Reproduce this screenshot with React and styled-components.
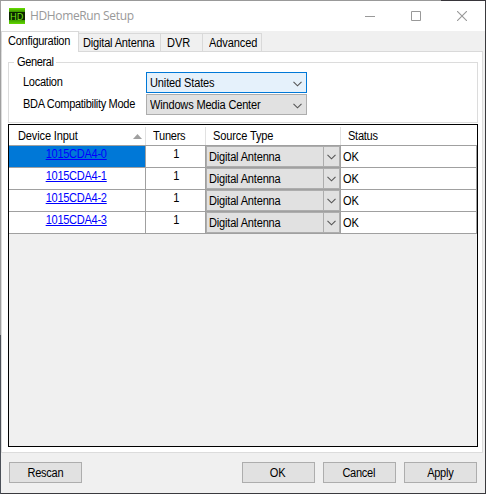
import React from "react";
import styled, { createGlobalStyle } from "styled-components";

const GlobalStyle = createGlobalStyle`
  * { box-sizing: border-box; }
  body { margin: 0; background: #3a3a3e; overflow: hidden; }
  button { font: inherit; color: inherit; }
`;

const Desktop = styled.div`
  width: 486px;
  height: 494px;
  padding: 1px;
  background:
    linear-gradient(90deg, #999 441px, #37353a 441px) 0 0 / 486px 1px no-repeat,
    linear-gradient(#a0a0a0 335px, #4b5058 335px) 0 0 / 1px 494px no-repeat,
    #3a3a3e;
`;

const Window = styled.main`
  width: 484px;
  height: 492px;
  display: flex;
  flex-direction: column;
  background: #f0f0f0;
  font: 12px/13px "Liberation Sans", Arial, sans-serif;
  color: #000;
`;

const Label = styled.span`
  display: inline-block;
  white-space: nowrap;
  letter-spacing: ${(p) => p.$track ?? -0.3}px;
  transform: scaleX(0.92);
  transform-origin: ${(p) => (p.$center ? "center" : "left")};
`;

const TitleBar = styled.header`
  height: 30px;
  flex: none;
  display: flex;
  align-items: center;
  padding-left: 8px;
  background: #fff;
`;

const Logo = styled.svg`
  width: 16px;
  height: 16px;
  margin-right: 5px;
`;

const Title = styled.h1`
  flex: 1;
  margin: 0;
  font: 12px/16px "Open Sans", sans-serif;
  letter-spacing: -0.36px;
  color: #999;
`;

const WindowButton = styled.button`
  width: 46px;
  height: 30px;
  padding: 0;
  border: 0;
  display: grid;
  place-items: center;
  background: transparent;
`;

const TabStrip = styled.nav`
  height: 21px;
  flex: none;
  display: flex;
  align-items: flex-end;
`;

const Tab = styled.button`
  width: ${(p) => p.$width}px;
  height: ${(p) => (p.$active ? 21 : 19)}px;
  padding: 3px 0 0 ${(p) => p.$left}px;
  border: solid #d9d9d9;
  border-width: ${(p) => (p.$active ? "1px 1px 0 1px" : "1px 1px 1px 0")};
  display: flex;
  align-items: flex-start;
  background: ${(p) => (p.$active ? "#fff" : "#f0f0f0")};
`;

const TabFill = styled.div`
  flex: 1;
  height: 1px;
  margin-right: 2px;
  background: #d9d9d9;
`;

const Panel = styled.section`
  width: 482px;
  height: 401px;
  flex: none;
  padding: 10px 5px 5px 6px;
  border: solid #dcdcdc;
  border-width: 0 1px 1px 1px;
  background: #fff;
`;

const Group = styled.fieldset`
  height: 67px;
  width: 470px;
  margin: -6px 0 0;
  padding: 3px 0 0 14px;
  border: 1px solid #dcdcdc;
  min-width: 0;
`;

const Legend = styled.legend`
  width: 42px;
  height: 13px;
  margin-left: -9px;
  padding: 0 2px 0 3px;
`;

const Field = styled.div`
  height: 22px;
  display: grid;
  grid-template-columns: 123px 161px;
  align-items: start;
`;

const FieldLabel = styled.label`
  padding-top: 4px;
`;

const Combo = styled.div`
  height: 21px;
  display: flex;
  align-items: center;
  justify-content: space-between;
  padding: ${(p) => (p.$cell ? "2px 4px 0 2px" : "2px 4px 0 3px")};
  border: 1px solid ${(p) => (p.$focus ? "#0078d7" : "#adadad")};
  background: ${(p) => (p.$focus ? "#e5f1fb" : "#e1e1e1")};
`;

const Grid = styled.div`
  width: 470px;
  height: 323px;
  margin-top: 1px;
  border: 1px solid #000;
  background: #f0f0f0;
`;

const HeaderRow = styled.div`
  height: 21px;
  display: grid;
  grid-template-columns: 137px 60px 135px 136px;
  background: #fff;
  border-bottom: 1px solid #a0a0a0;
`;

const HeaderCell = styled.div`
  display: flex;
  justify-content: space-between;
  align-items: center;
  margin-top: 2px;
  padding: 0 3px 0 ${(p) => p.$left ?? 7}px;
  border-right: ${(p) => (p.$last ? 0 : 1)}px solid #e1e1e1;
`;

const Row = styled.div`
  height: 22px;
  display: grid;
  grid-template-columns: 137px 60px 135px 136px;
  background: #fff;
`;

const Cell = styled.div`
  padding: ${(p) => p.$pad ?? "2px 0 0"};
  text-align: ${(p) => p.$align ?? "center"};
  border: solid #a0a0a0;
  border-width: 0 1px 1px 0;
  background: ${(p) => (p.$selected ? "#0078d7" : "transparent")};
`;

const ComboCell = styled(Cell)`
  background: #e1e1e1;
  padding: 0;
`;

const DropButton = styled.span`
  height: 19px;
  width: 16px;
  margin: -2px -4px 0 0;
  display: grid;
  place-items: center;
  border-left: 1px solid #adadad;
`;

const DeviceLink = styled(Label).attrs({ as: "a" })`
  color: #00f;
  text-decoration: underline;
  text-underline-offset: 1px;
  text-decoration-thickness: 1px;
  text-decoration-skip-ink: none;
`;

const Footer = styled.footer`
  display: flex;
  gap: 8px;
  padding: 9px 8px 0 8px;
`;

const Button = styled.button`
  width: 73px;
  height: 21px;
  padding: 1px 1px 0 0;
  border: 1px solid #adadad;
  background: #e1e1e1;
  &:first-child { margin-right: auto; }
`;

const Chevron = () => (
  <svg width="9" height="6" viewBox="0 0 9 6" fill="none" stroke="#555" strokeWidth="1.1">
    <path d="M.5 .8 4.5 4.8 8.5 .8" />
  </svg>
);

const tabs = [
  { name: "Configuration", width: 78, left: 6, active: true },
  { name: "Digital Antenna", width: 82, left: 4, track: -0.2 },
  { name: "DVR", width: 42, left: 6, track: 0 },
  { name: "Advanced", width: 59, left: 6, track: -0.1 },
];
const devices = ["1015CDA4-0", "1015CDA4-1", "1015CDA4-2", "1015CDA4-3"];

export default function App() {
  return (
    <>
      <GlobalStyle />
      <Desktop>
        <Window>
          <TitleBar>
            <Logo viewBox="0 0 16 16">
              <defs>
                <linearGradient id="band" x2="0" y2="1">
                  <stop offset="0" stopColor="#66e000" />
                  <stop offset=".25" stopColor="#3c9000" />
                  <stop offset=".26" stopColor="#0c2600" />
                  <stop offset=".75" stopColor="#0c2600" />
                  <stop offset=".76" stopColor="#3fa000" />
                  <stop offset="1" stopColor="#62d800" />
                </linearGradient>
              </defs>
              <rect width="16" height="16" fill="url(#band)" />
              <text x="1" y="11.5" textLength="13.5" lengthAdjust="spacingAndGlyphs" fontFamily="Open Sans" fontSize="9.5" fill="#78f014">HD</text>
            </Logo>
            <Title>HDHomeRun Setup</Title>
            <WindowButton aria-label="Minimize">
              <svg width="10" height="10"><path d="M0 5.5h10" stroke="#999" /></svg>
            </WindowButton>
            <WindowButton aria-label="Maximize">
              <svg width="10" height="10"><path d="M.5.5h9v9h-9z" fill="none" stroke="#999" /></svg>
            </WindowButton>
            <WindowButton aria-label="Close">
              <svg width="10" height="10"><path d="m0 0 10 10M10 0 0 10" stroke="#999" strokeWidth="1.1" /></svg>
            </WindowButton>
          </TitleBar>
          <TabStrip>
            {tabs.map((t) => (
              <Tab key={t.name} $width={t.width} $left={t.left} $active={t.active}>
                <Label $track={t.track}>{t.name}</Label>
              </Tab>
            ))}
            <TabFill />
          </TabStrip>
          <Panel>
            <Group>
              <Legend><Label $track={-0.4}>General</Label></Legend>
              <Field>
                <FieldLabel><Label>Location</Label></FieldLabel>
                <Combo $focus><Label $track={-0.15}>United States</Label><Chevron /></Combo>
              </Field>
              <Field>
                <FieldLabel><Label $track={-0.35}>BDA Compatibility Mode</Label></FieldLabel>
                <Combo><Label $track={-0.2}>Windows Media Center</Label><Chevron /></Combo>
              </Field>
            </Group>
            <Grid>
              <HeaderRow>
                <HeaderCell $left={9}>
                  <Label $track={-0.15}>Device Input</Label>
                  <svg width="9" height="5"><path d="M4.5 0 9 5H0z" fill="#a0a0a0" /></svg>
                </HeaderCell>
                <HeaderCell><Label>Tuners</Label></HeaderCell>
                <HeaderCell><Label $track={-0.15}>Source Type</Label></HeaderCell>
                <HeaderCell $last><Label>Status</Label></HeaderCell>
              </HeaderRow>
              {devices.map((id, i) => (
                <Row key={id}>
                  <Cell $selected={i === 0} $pad="2px 1px 0 0"><DeviceLink $center>{id}</DeviceLink></Cell>
                  <Cell $pad="2px 0 0 2px"><Label $center>1</Label></Cell>
                  <ComboCell>
                    <Combo $cell>
                      <Label $track={-0.2}>Digital Antenna</Label>
                      <DropButton><Chevron /></DropButton>
                    </Combo>
                  </ComboCell>
                  <Cell $align="left" $pad="5px 0 0 2px"><Label $track={0}>OK</Label></Cell>
                </Row>
              ))}
            </Grid>
          </Panel>
          <Footer>
            <Button><Label $center>Rescan</Label></Button>
            <Button><Label $center $track={0}>OK</Label></Button>
            <Button><Label $center>Cancel</Label></Button>
            <Button><Label $center>Apply</Label></Button>
          </Footer>
        </Window>
      </Desktop>
    </>
  );
}
